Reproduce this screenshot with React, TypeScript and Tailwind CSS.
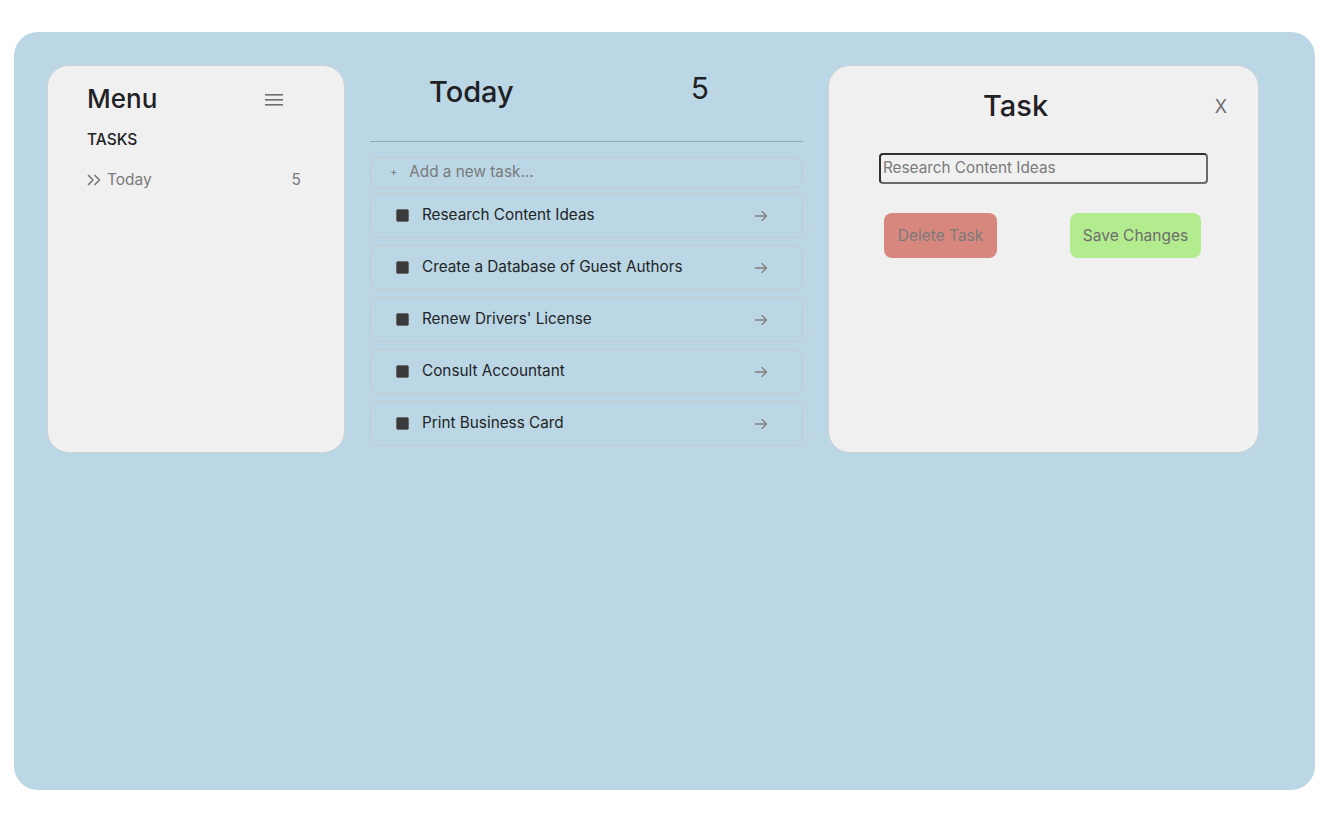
import React from "react";

const tasks = [
  "Research Content Ideas",
  "Create a Database of Guest Authors",
  "Renew Drivers' License",
  "Consult Accountant",
  "Print Business Card",
];

function Arrow() {
  return (
    <svg width="14" height="14" viewBox="0 0 14 14" fill="none" stroke="#808080" strokeWidth="1.3" strokeLinecap="round" strokeLinejoin="round">
      <path d="M1.5 7h11M8 2.5 12.5 7 8 11.5" />
    </svg>
  );
}

export default function App() {
  return (
    <div className="w-full h-[837px] bg-white pt-8 px-[20px]" style={{ fontFamily: "Inter, 'Noto Sans', sans-serif" }}>
      <div className="ml-[-6px] w-[1301px] h-[758px] rounded-[24px] bg-[#bbd7e5] pt-[33px] pl-[33px] flex items-start gap-[25px]">
        {/* Left menu */}
        <div className="w-[298px] h-[388px] rounded-[22px] bg-[#f0f0f0] border border-[#cfd3d6] pl-[39px] pt-[15px]">
          <div className="w-[196px] h-[36px] flex items-center justify-between">
            <span className="text-[26px] leading-[36px] font-medium text-[#1f2124]">Menu</span>
            <svg width="18" height="12" viewBox="0 0 18 12" className="mt-[1px]">
              <rect x="0" y="0" width="18" height="1.6" fill="#6e6e6e" />
              <rect x="0" y="5" width="18" height="1.6" fill="#6e6e6e" />
              <rect x="0" y="10" width="18" height="1.6" fill="#6e6e6e" />
            </svg>
          </div>
          <div className="mt-[11px] text-[15.5px] leading-[24px] font-medium text-[#1f2124]">TASKS</div>
          <div className="mt-[16px] w-[214px] flex items-center justify-between text-[15.5px] leading-[24px] text-[#7a7a7a]">
            <div className="flex items-center gap-[5px]">
              <svg width="15" height="12" viewBox="0 0 15 12" fill="none" stroke="#7a7a7a" strokeWidth="1.7" strokeLinecap="round" strokeLinejoin="round">
                <path d="M1.5 1.5 6 6l-4.5 4.5M8 1.5 12.5 6 8 10.5" />
              </svg>
              <span>Today</span>
            </div>
            <span>5</span>
          </div>
        </div>

        {/* Middle */}
        <div className="w-[433px]">
          <div className="h-[76px] flex items-start">
            <span className="ml-[59px] mt-[7px] text-[29px] leading-[40px] font-medium text-[#1f2124]">Today</span>
            <span className="ml-[177px] mt-[3px] text-[30px] leading-[40px] text-[#1f2124]">5</span>
          </div>
          <div className="h-px bg-[#8fa8b4]" />
          <div className="mt-[15px] h-[31px] rounded-[8px] border border-[#c4cacd] flex items-center pl-[19px] text-[15.3px] text-[#7a7a7a]">
            <span className="text-[11px] mr-[12px]">+</span>
            <span>Add a new task...</span>
          </div>
          <div className="mt-[5px] flex flex-col gap-[7px]">
            {tasks.map((t) => (
              <div key={t} className="h-[45px] rounded-[8px] border border-[#c4cacd] flex items-center pl-[25px] pr-[34px]">
                <span className="w-[13px] h-[13px] rounded-[2px] bg-[#3a3a3a] border border-[#6a6a6a]" />
                <span className="ml-[13px] text-[15.3px] text-[#222426]">{t}</span>
                <span className="ml-auto">
                  <Arrow />
                </span>
              </div>
            ))}
          </div>
        </div>

        {/* Right */}
        <div className="w-[431px] h-[388px] rounded-[22px] bg-[#f0f0f0] border border-[#cfd3d6]">
          <div className="flex items-center h-[40px] mt-[20px]">
            <span className="ml-[154px] text-[29px] leading-[40px] font-medium text-[#1f2124]">Task</span>
            <span className="ml-auto mr-[31px] text-[18px] text-[#6e6e6e]">X</span>
          </div>
          <div className="mt-[27px] ml-[50px] w-[329px] h-[31px] rounded-[4px] border-2 border-[#2f2f2f] border-b-[#6a6a6a] border-r-[#6a6a6a] flex items-center pl-[2px] text-[15.3px] text-[#7a7a7a]">
            Research Content Ideas
          </div>
          <div className="mt-[29px] flex">
            <button className="ml-[55px] w-[113px] h-[45px] rounded-[8px] bg-[#d8877f] text-[15.5px] text-[#7a7a7a]">Delete Task</button>
            <button className="ml-[73px] w-[131px] h-[45px] rounded-[8px] bg-[#b3eb8f] text-[15.5px] text-[#6e6e6e]">Save Changes</button>
          </div>
        </div>
      </div>
    </div>
  );
}
